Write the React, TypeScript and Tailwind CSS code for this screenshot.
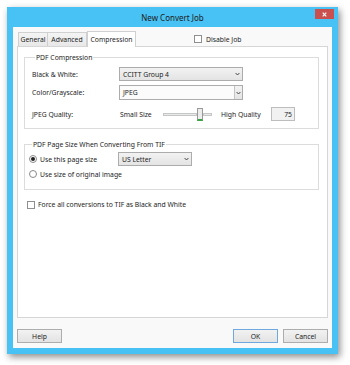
import type { ReactNode } from 'react';

// Small chevron used by the combo boxes
function Chevron() {
  return (
    <svg width="5" height="4" viewBox="0 0 5 4" className="shrink-0">
      <path d="M0.6 1 L2.5 3 L4.4 1" fill="none" stroke="#3a3a3a" strokeWidth="0.9" />
    </svg>
  );
}

function Combo({ value, width, editable }: { value: string; width: string; editable?: boolean }) {
  if (editable) {
    return (
      <div className={`${width} h-[15px] flex border border-[#acacac] bg-[#f7f7f7]`}>
        <div className="flex-1 flex items-center pl-[3px] border-r border-[#c4c4c4] bg-[#fbfbfb]">{value}</div>
        <div className="w-[7px] flex items-center justify-center bg-gradient-to-b from-[#f2f2f2] to-[#e4e4e4]">
          <Chevron />
        </div>
      </div>
    );
  }
  return (
    <div
      className={`${width} h-[14px] flex items-center justify-between pl-[3px] pr-[2px] border border-[#acacac] bg-gradient-to-b from-[#f2f2f2] to-[#e4e4e4]`}
    >
      <span>{value}</span>
      <Chevron />
    </div>
  );
}

function CheckBox() {
  return <span className="w-[8px] h-[8px] shrink-0 border border-[#8f8f8f] bg-white" />;
}

function Radio({ checked }: { checked?: boolean }) {
  return (
    <span className="w-[8px] h-[8px] shrink-0 rounded-full border border-[#8a8a8a] bg-white flex items-center justify-center">
      {checked && <span className="w-[4px] h-[4px] rounded-full bg-[#222]" />}
    </span>
  );
}

function Button({ children, def }: { children: ReactNode; def?: boolean }) {
  return (
    <div
      className={`w-[45px] h-[14px] flex items-center justify-center border bg-gradient-to-b from-[#f2f2f2] to-[#e3e3e3] ${
        def ? 'border-[#6fa8dc]' : 'border-[#adadad]'
      }`}
    >
      {children}
    </div>
  );
}

export default function App() {
  return (
    <div className="w-[350px] h-[365px] bg-white pt-[7px] pl-[7px] text-[6.8px] leading-[9px] text-[#1c1c1c] font-['Noto_Sans','Liberation_Sans',sans-serif]">
      {/* Window */}
      <div className="w-[331px] h-[347px] flex flex-col bg-[#48c2f4] shadow-[2px_3px_7px_rgba(0,0,0,0.45)]">
        {/* Title bar */}
        <div className="h-[20px] grid grid-cols-[1fr_auto_1fr] items-start">
          <div />
          <div className="self-center text-[8px] leading-[10px] text-[#202020] pt-[1px]">New Convert Job</div>
          <div className="flex justify-end pr-[4px] pt-[2px]">
            <div className="w-[19px] h-[10px] bg-[#c9504f] flex items-center justify-center">
              <svg width="5" height="5" viewBox="0 0 5 5">
                <path d="M0.7 0.7 L4.3 4.3 M4.3 0.7 L0.7 4.3" stroke="#fff" strokeWidth="1.1" />
              </svg>
            </div>
          </div>
        </div>

        {/* Client area */}
        <div className="mx-[6px] h-[321px] bg-[#f9f9f9] flex flex-col px-[4px] pt-[4px]">
          {/* Tabs row */}
          <div className="h-[15px] flex items-end">
            <div className="ml-[1px] w-[30px] h-[14px] flex items-center justify-center border border-b-0 border-[#d0d0d0] bg-gradient-to-b from-[#f4f4f4] to-[#e8e8e8]">
              General
            </div>
            <div className="w-[39px] h-[14px] flex items-center justify-center border border-b-0 border-l-0 border-[#d0d0d0] bg-gradient-to-b from-[#f4f4f4] to-[#e8e8e8]">
              Advanced
            </div>
            <div className="relative z-10 -mb-px w-[49px] h-[16px] flex items-center justify-center border border-b-0 border-[#d0d0d0] bg-white">
              Compression
            </div>
            <div className="ml-[58px] self-center flex items-center gap-[4px] pt-[1px]">
              <CheckBox />
              <span>Disable Job</span>
            </div>
          </div>

          {/* Tab page */}
          <div className="h-[272px] border border-[#d6d6d6] bg-white pl-[6px] pt-[6px] flex flex-col">
            <fieldset className="w-[295px] border border-[#dcdcdc] pl-[7px] pb-[7px]">
              <legend className="ml-[3px] px-[1px]">PDF Compression</legend>
              <div className="mt-[5px] flex items-center">
                <span className="w-[87px]">Black &amp; White:</span>
                <Combo value="CCITT Group 4" width="w-[124px]" />
              </div>
              <div className="mt-[4px] flex items-center">
                <span className="w-[87px]">Color/Grayscale:</span>
                <Combo value="JPEG" width="w-[124px]" editable />
              </div>
              <div className="mt-[7px] h-[14px] flex items-center">
                <span className="w-[88px]">JPEG Quality:</span>
                <span className="w-[33px]">Small Size</span>
                {/* slider */}
                <div className="ml-[10px] w-[49px] h-[14px] flex items-center">
                  <div className="w-[34px] h-[3px] border border-[#c6c6c6] bg-[#e7eaea]" />
                  <div className="w-[6px] h-[13px] border border-[#9a9a9a] border-b-2 border-b-[#3aa24a] bg-[#ececec]" />
                  <div className="w-[9px] h-[3px] border border-[#c6c6c6] bg-[#e7eaea]" />
                </div>
                <span className="ml-[9px] w-[50px]">High Quality</span>
                <div className="w-[24px] h-[14px] border border-[#bdbdbd] bg-[#f1f1f1] flex items-center justify-end pr-[2px]">
                  75
                </div>
              </div>
            </fieldset>

            <fieldset className="mt-[11px] w-[295px] border border-[#dcdcdc] pl-[4px] pb-[10px]">
              <legend className="ml-[3px] px-[1px]">PDF Page Size When Converting From TIF</legend>
              <div className="mt-[3px] flex items-center">
                <div className="w-[89px] flex items-center gap-[3px]">
                  <Radio checked />
                  <span>Use this page size</span>
                </div>
                <Combo value="US Letter" width="w-[74px]" />
              </div>
              <div className="mt-[3px] h-[10px] flex items-center gap-[3px]">
                <Radio />
                <span>Use size of original image</span>
              </div>
            </fieldset>

            <div className="mt-[10px] ml-[3px] h-[9px] flex items-center gap-[3px]">
              <CheckBox />
              <span>Force all conversions to TIF as Black and White</span>
            </div>
          </div>

          {/* Buttons */}
          <div className="mt-[11px] flex items-center">
            <Button>Help</Button>
            <div className="flex-1" />
            <Button def>OK</Button>
            <div className="ml-[5px]">
              <Button>Cancel</Button>
            </div>
          </div>
        </div>
      </div>
    </div>
  );
}
